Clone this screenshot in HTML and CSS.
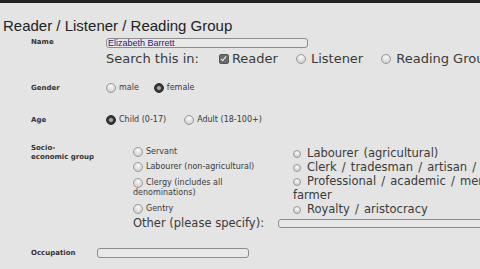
FILE: index.html
```html
<!DOCTYPE html>
<html lang="en">
<head>
<meta charset="utf-8">
<title>Reader / Listener / Reading Group</title>
<link rel="stylesheet" href="styles.css">
</head>
<body>
<div class="topbar"></div>
<h1 class="title">Reader / Listener / Reading Group</h1>
<form class="form">
  <div class="row row-name">
    <div class="label">Name</div>
    <div class="field">
      <input class="text-input name-input" type="text" value="Elizabeth Barrett">
      <div class="search-in">
        <span class="search-label">Search this in:</span>
        <label class="opt"><span class="checkbox checked"></span>Reader</label>
        <label class="opt"><span class="radio"></span>Listener</label>
        <label class="opt"><span class="radio"></span>Reading Group</label>
      </div>
    </div>
  </div>

  <div class="row row-gender">
    <div class="label">Gender</div>
    <div class="field options small">
      <label class="opt"><span class="radio"></span>male</label>
      <label class="opt opt-female"><span class="radio checked"></span>female</label>
    </div>
  </div>

  <div class="row row-age">
    <div class="label">Age</div>
    <div class="field options small">
      <label class="opt"><span class="radio checked"></span>Child (0-17)</label>
      <label class="opt opt-adult"><span class="radio"></span>Adult (18-100+)</label>
    </div>
  </div>

  <div class="row row-socio">
    <div class="label label-socio">Socio-<br>economic group</div>
    <div class="socio-left">
      <label class="item"><span class="radio"></span>Servant</label>
      <label class="item"><span class="radio"></span>Labourer (non-agricultural)</label>
      <label class="item"><span class="radio"></span>Clergy (includes all<br>denominations)</label>
      <label class="item"><span class="radio"></span>Gentry</label>
    </div>
    <div class="socio-right">
      <label class="item"><span class="radio mini"></span>Labourer (agricultural)</label>
      <label class="item"><span class="radio mini"></span>Clerk / tradesman / artisan / shopkeeper</label>
      <label class="item"><span class="radio mini"></span>Professional / academic / merchant / farmer</label>
      <label class="item"><span class="radio mini"></span>Royalty / aristocracy</label>
    </div>
  </div>

  <div class="row-other">
    <span class="other-label">Other (please specify):</span>
    <input class="text-input other-input" type="text">
  </div>

  <div class="row row-occupation">
    <div class="label">Occupation</div>
    <div class="field">
      <input class="text-input occupation-input" type="text">
    </div>
  </div>
</form>
</body>
</html>
```

FILE: styles.css
```css
html {
  overflow: hidden;
}

body {
  margin: 0;
  background: #e4e4e4;
  color: #333;
  font-family: "DejaVu Sans", Verdana, sans-serif;
  width: 640px;
}

.topbar {
  height: 3px;
  background: #222;
}

.title {
  margin: 0;
  padding: 14px 0 0 3px;
  font-family: "Liberation Sans", Arial, sans-serif;
  font-weight: normal;
  font-size: 15px;
  line-height: 18px;
  color: #222;
}

.form {
  margin: 0;
}

.row {
  display: grid;
  grid-template-columns: 75px 1fr;
  align-items: center;
  padding-left: 31px;
}

.label {
  font-size: 7px;
  font-weight: bold;
  line-height: 9px;
  color: #333;
}

.row-name {
  margin-top: 3px;
  align-items: start;
}

.row-name .label {
  line-height: 8px;
}

.text-input {
  display: block;
  box-sizing: border-box;
  margin: 0;
  height: 10px;
  padding: 0 1px;
  border: 1px solid #8c8c8c;
  border-radius: 3px;
  background: #e8e8e8;
  font-family: "Liberation Sans", Arial, sans-serif;
  font-size: 9px;
  line-height: 8px;
  color: #1c1c7c;
  outline: none;
}

.name-input {
  width: 202px;
}

.search-in {
  display: flex;
  align-items: center;
  margin-top: 3px;
  font-size: 13px;
  line-height: 15px;
  color: #3a3a3a;
  white-space: nowrap;
}

.search-in .opt {
  margin-left: 20px;
}

.search-in .opt + .opt {
  margin-left: 18px;
}

.search-in .radio {
  margin-right: 5px;
}

.opt {
  display: inline-flex;
  align-items: center;
}

.checkbox {
  display: inline-block;
  box-sizing: border-box;
  width: 10px;
  height: 10px;
  margin-right: 3px;
  border-radius: 2px;
  border: 1px solid #555;
  background: #6a6a6a;
  position: relative;
}

.checkbox.checked::after {
  content: "";
  position: absolute;
  left: 2px;
  top: 0px;
  width: 2px;
  height: 5px;
  border: solid #f2f2f2;
  border-width: 0 1.5px 1.5px 0;
  transform: rotate(40deg);
}

.radio {
  display: inline-block;
  box-sizing: border-box;
  width: 10px;
  height: 10px;
  border-radius: 50%;
  border: 1px solid #9a9a9a;
  background: radial-gradient(circle at 50% 30%, #fafafa 0, #e2e2e2 45%, #c4c4c4 100%);
  margin-right: 3px;
  flex: none;
}

.radio.checked {
  border-color: #2a2a2a;
  background: radial-gradient(circle at 50% 50%, #b4b4b4 0, #9a9a9a 1.6px, #3a3a3a 2.4px, #2e2e2e 100%);
}

.radio.mini {
  width: 8px;
  height: 8px;
  margin-right: 6px;
  vertical-align: -0.5px;
}

.options {
  display: flex;
  align-items: center;
  color: #3a3a3a;
}

.small {
  font-size: 8px;
  line-height: 10px;
}

.opt-female {
  margin-left: 15px;
}

.opt-adult {
  margin-left: 18px;
}

.row-gender {
  margin-top: 17px;
}

.row-age {
  margin-top: 22px;
}

.row-socio {
  grid-template-columns: 102px 160px 262px;
  align-items: start;
  margin-top: 21px;
}

.label-socio {
  margin-top: -2px;
}

.socio-left {
  margin-top: 1px;
  font-size: 8px;
  line-height: 10px;
  color: #3a3a3a;
}

.socio-left .item {
  display: block;
  margin-bottom: 5px;
  white-space: nowrap;
}

.socio-left .item:last-child {
  margin-bottom: 0;
}

.socio-left .item:nth-child(3) {
  line-height: 9.5px;
  margin-top: 6px;
  margin-bottom: 6px;
}

.socio-left .radio {
  vertical-align: top;
}

.socio-right {
  font-size: 11.5px;
  line-height: 14px;
  word-spacing: 1.5px;
  color: #3a3a3a;
}

.socio-right .item {
  display: block;
}

.row-other {
  display: flex;
  align-items: center;
  padding-left: 133px;
  font-size: 11.5px;
  line-height: 14px;
  color: #3a3a3a;
  white-space: nowrap;
}

.other-input {
  margin-left: 14px;
  width: 240px;
  height: 9px;
  flex: none;
}

.row-occupation {
  grid-template-columns: 66px 1fr;
  margin-top: 18px;
}

.occupation-input {
  width: 152px;
}
```
